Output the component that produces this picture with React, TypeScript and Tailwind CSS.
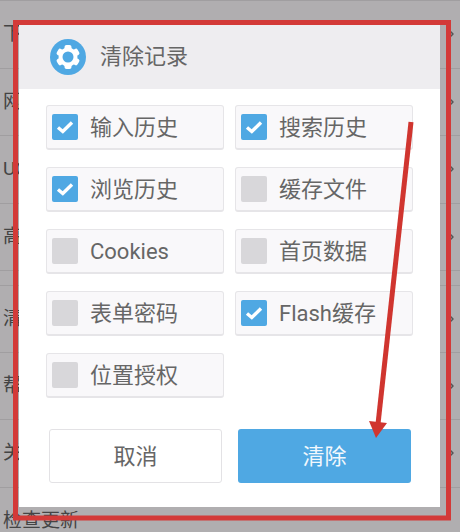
import React from 'react';
import { ChevronRight } from 'lucide-react';

const font = { fontFamily: 'Roboto, "Noto Sans CJK SC", sans-serif' };

const rows = [
  { label: '下', top: false, arrow: true },
  { label: '网', top: false, arrow: true },
  { label: 'UC', top: false, arrow: true },
  { label: '高', top: false, arrow: true },
  { label: '清', top: true, arrow: true },
  { label: '帮', top: false, arrow: true },
  { label: '关', top: false, arrow: true },
  { label: '检查更新', top: false, arrow: false },
];

const options = [
  { label: '输入历史', checked: true },
  { label: '搜索历史', checked: true },
  { label: '浏览历史', checked: true },
  { label: '缓存文件', checked: false },
  { label: 'Cookies', checked: false },
  { label: '首页数据', checked: false },
  { label: '表单密码', checked: false },
  { label: 'Flash缓存', checked: true },
  { label: '位置授权', checked: false },
];

function GearIcon() {
  return (
    <svg width="36" height="36" viewBox="0 0 36 36">
      <circle cx="18" cy="18" r="18" fill="#4fa8e3" />
      {[0, 60, 120, 180, 240, 300].map((deg) => (
        <rect key={deg} x="14.5" y="6" width="7" height="8" rx="2" fill="#fff" transform={`rotate(${deg} 18 18)`} />
      ))}
      <circle cx="18" cy="18" r="9.5" fill="#fff" />
      <circle cx="18" cy="18" r="5.5" fill="#4fa8e3" />
    </svg>
  );
}

function Option({ label, checked }: { label: string; checked: boolean }) {
  return (
    <div className="h-[45px] flex items-center gap-[12px] pl-[5px] bg-[#f9f8fa] border border-[#e6e5e8] border-b-2 rounded-[3px]">
      {checked ? (
        <div className="w-[26px] h-[26px] rounded-[2px] bg-[#4fa8e3] flex items-center justify-center">
          <svg width="18" height="14" viewBox="0 0 18 14" fill="none">
            <path d="M2 7.5 L6.8 11.5 L16 2.5" stroke="#fff" strokeWidth="3.4" />
          </svg>
        </div>
      ) : (
        <div className="w-[26px] h-[26px] rounded-[2px] bg-[#d8d7da]" />
      )}
      <span className="pt-[2px] text-[22px] leading-none text-[#666666]">{label}</span>
    </div>
  );
}

export default function App() {
  return (
    <div className="relative w-[460px] h-[532px] overflow-hidden bg-[#b0aeb0]" style={font}>
      {/* settings list behind the dialog */}
      <div className="border-t border-[#a09ea0]">
        {rows.map((row) => (
          <div
            key={row.label}
            className={`h-[67.5px] flex items-center justify-between border-b border-[#a09ea0] pl-[3px] text-[19px] text-[#444] ${row.top ? 'mt-[14px] border-t' : ''}`}
          >
            <span>{row.label}</span>
            {row.arrow && <ChevronRight size={24} strokeWidth={1.5} className="-mr-[2px] text-[#555]" />}
          </div>
        ))}
      </div>

      {/* dialog */}
      <div className="absolute left-[19px] top-[25px] w-[421px] h-[482px] bg-white flex flex-col">
        <div className="h-[64px] bg-[#eeedf0] flex items-center gap-[14px] pl-[31px]">
          <GearIcon />
          <span className="text-[22px] leading-none text-[#666666]">清除记录</span>
        </div>
        <div className="grid grid-cols-[178px_178px] gap-x-[11px] gap-y-[17px] pl-[27px] pt-[16px]">
          {options.map((o) => (
            <Option key={o.label} label={o.label} checked={o.checked} />
          ))}
        </div>
        <div className="flex gap-[16px] pl-[30px] pt-[31px]">
          <button className="w-[173px] h-[54px] bg-white border border-[#e3e2e5] rounded-[3px] text-[22px] text-[#666666]">
            取消
          </button>
          <button className="w-[173px] h-[54px] bg-[#4fa8e3] rounded-[3px] text-[22px] text-[#f2f8fd]">
            清除
          </button>
        </div>
      </div>

      {/* red annotation drawn over the screenshot */}
      <svg className="absolute inset-0 pointer-events-none" width="460" height="532" viewBox="0 0 460 532" fill="none">
        <rect x="15.5" y="22.5" width="433" height="495.5" stroke="#d33a38" strokeWidth="5" />
        <path d="M411 122 L378 424" stroke="#d0352f" strokeWidth="5" />
        <path d="M369 421 L387 423 L376 438 Z" fill="#d0352f" />
      </svg>
    </div>
  );
}
